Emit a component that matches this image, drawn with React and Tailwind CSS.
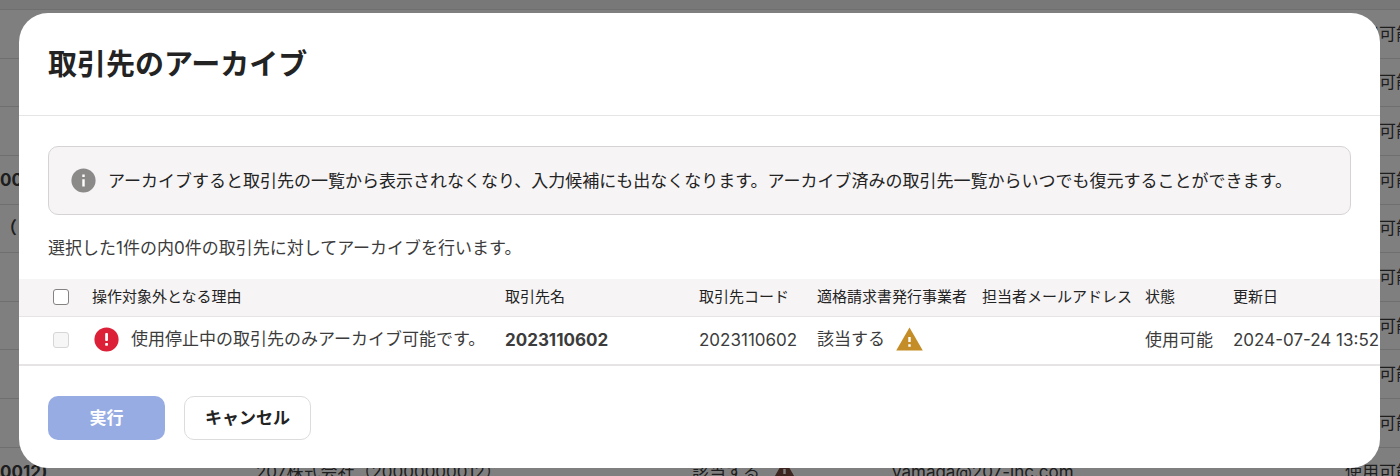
const backgroundRows = [
  { id: 1, name: '' },
  { id: 2, name: '' },
  { id: 3, name: '' },
  { id: 4, name: '00' },
  { id: 5, name: '（' },
  { id: 6, name: '' },
  { id: 7, name: '' },
  { id: 8, name: '' },
  { id: 9, name: '' },
  {
    id: 10,
    name: '0012)',
    company: '207株式会社（20000000012）',
    invoice: '該当する',
    email: 'yamada@207-inc.com',
  },
];

const partners = [
  {
    reason: '使用停止中の取引先のみアーカイブ可能です。',
    name: '2023110602',
    code: '2023110602',
    invoice: '該当する',
    email: '',
    status: '使用可能',
    updatedAt: '2024-07-24 13:52',
  },
];

export default function App() {
  return (
    <div className="relative min-h-screen overflow-hidden bg-white font-[Inter,'Noto_Sans_CJK_JP',sans-serif] text-[17px] leading-6 text-[#3c3c3c]">
      <BackgroundTable />
      <div className="relative flex min-h-screen items-start bg-black/50 pt-[13px] pr-5 pl-[19px]">
        <ArchiveDialog />
      </div>
    </div>
  );
}

function BackgroundTable() {
  return (
    <div className="absolute inset-0 overflow-hidden bg-[#f3f1f2] pt-[9px]" aria-hidden="true">
      <table className="h-[487px] w-full table-fixed bg-white text-left whitespace-nowrap">
        <colgroup>
          <col className="w-[256px]" />
          <col className="w-[436px]" />
          <col className="w-[200px]" />
          <col />
          <col className="w-[55px]" />
        </colgroup>
        <tbody>
          {backgroundRows.map((row) => (
            <tr key={row.id} className="h-12 border-t border-[#e0dfdf]">
              <td className="font-bold">{row.name}</td>
              <td>{row.company}</td>
              <td>
                {row.invoice && (
                  <span className="flex items-center gap-2.5">
                    {row.invoice}
                    <WarningIcon className="size-[29px] text-[#7a4a40]" />
                  </span>
                )}
              </td>
              <td>{row.email}</td>
              <td>使用可能</td>
            </tr>
          ))}
        </tbody>
      </table>
    </div>
  );
}

function ArchiveDialog() {
  return (
    <section
      role="dialog"
      aria-modal="true"
      aria-labelledby="dialog-title"
      className="w-full overflow-hidden rounded-[29px] bg-white"
    >
      <header className="border-b border-[#e6e4e4] px-[29px] pt-8 pb-[30px]">
        <h1 id="dialog-title" className="text-[29px] leading-10 font-bold text-[#232323]">
          取引先のアーカイブ
        </h1>
      </header>

      <div className="px-[29px] pt-[30px] pb-[19px]">
        <div className="flex items-center gap-2.5 rounded-[10px] border border-[#d5d3d4] bg-[#f6f4f5] px-5 py-[19px] text-[#232323]">
          <InfoIcon className="size-[29px] shrink-0 text-[#8c8989]" />
          <p>
            アーカイブすると取引先の一覧から表示されなくなり、入力候補にも出なくなります。アーカイブ済みの取引先一覧からいつでも復元することができます。
          </p>
        </div>
        <p className="mt-[21px]">選択した1件の内0件の取引先に対してアーカイブを行います。</p>
      </div>

      <PartnerTable />

      <footer className="flex gap-[19px] px-[29px] pt-[30px] pb-7">
        <button
          type="button"
          disabled
          className="h-11 w-[117px] rounded-[10px] bg-[#97ace3] font-bold text-white"
        >
          実行
        </button>
        <button
          type="button"
          className="h-11 rounded-[10px] border border-[#dddbdb] bg-white px-5 font-bold text-[#232323]"
        >
          キャンセル
        </button>
      </footer>
    </section>
  );
}

function PartnerTable() {
  return (
    <div className="overflow-hidden border-b border-[#e6e4e4]">
      <table className="w-full table-fixed text-left whitespace-nowrap">
        <colgroup>
          <col className="w-[63px]" />
          <col className="w-[413px]" />
          <col className="w-[194px]" />
          <col className="w-[118px]" />
          <col className="w-[165px]" />
          <col className="w-[163px]" />
          <col className="w-[88px]" />
          <col />
        </colgroup>
        <thead className="bg-[#f6f4f5] text-[15px] text-[#232323]">
          <tr className="h-[37px] border-b border-[#e6e4e4]">
            <th className="pl-[34px]">
              <Checkbox label="すべて選択" />
            </th>
            <HeaderCell>操作対象外となる理由</HeaderCell>
            <HeaderCell>取引先名</HeaderCell>
            <HeaderCell>取引先コード</HeaderCell>
            <HeaderCell>適格請求書発行事業者</HeaderCell>
            <HeaderCell>担当者メールアドレス</HeaderCell>
            <HeaderCell>状態</HeaderCell>
            <HeaderCell>更新日</HeaderCell>
          </tr>
        </thead>
        <tbody>
          {partners.map((partner) => (
            <tr key={partner.code} className="h-12 border-b border-[#e6e4e4]">
              <td className="pl-[34px]">
                <Checkbox label={partner.name} disabled />
              </td>
              <td className="px-2.5 pb-0.5">
                <span className="flex items-center gap-2.5">
                  <ErrorIcon className="size-[29px] shrink-0 text-[#dc2038]" />
                  {partner.reason}
                </span>
              </td>
              <td className="px-2.5 font-bold">{partner.name}</td>
              <td className="px-2.5">{partner.code}</td>
              <td className="px-2.5 pb-0.5">
                <span className="flex items-center gap-2.5">
                  {partner.invoice}
                  <WarningIcon className="size-[29px] shrink-0 text-[#c48d27]" />
                </span>
              </td>
              <td className="px-2.5">{partner.email}</td>
              <td className="px-2.5">{partner.status}</td>
              <td className="pl-2.5">{partner.updatedAt}</td>
            </tr>
          ))}
        </tbody>
      </table>
    </div>
  );
}

function HeaderCell({ children }) {
  return <th className="px-2.5 font-normal">{children}</th>;
}

function Checkbox({ label, disabled }) {
  return (
    <input
      type="checkbox"
      aria-label={label}
      disabled={disabled}
      className="block size-4 appearance-none rounded-[3px] border border-[#858282] bg-white checked:bg-[#2864f0] disabled:border-[#d7d5d5] disabled:bg-[#f7f6f6]"
    />
  );
}

function InfoIcon({ className }) {
  return (
    <svg viewBox="0 0 24 24" className={className} aria-hidden="true">
      <circle cx="12" cy="12" r="10" fill="currentColor" />
      <path d="M11 11h2v6h-2zM11 7h2v2h-2z" fill="white" />
    </svg>
  );
}

function ErrorIcon({ className }) {
  return (
    <svg viewBox="0 0 24 24" className={className} aria-hidden="true">
      <circle cx="12" cy="12" r="10" fill="currentColor" />
      <rect x="10.9" y="6.7" width="2.3" height="6.6" rx="0.8" fill="white" />
      <rect x="10.9" y="14.9" width="2.3" height="2.3" rx="0.6" fill="white" />
    </svg>
  );
}

function WarningIcon({ className }) {
  return (
    <svg viewBox="0 0 24 24" className={className} aria-hidden="true">
      <path d="M1 21h22L12 2 1 21z" fill="currentColor" />
      <path d="M11 16h2v2h-2zM11 10h2v4h-2z" fill="white" />
    </svg>
  );
}
